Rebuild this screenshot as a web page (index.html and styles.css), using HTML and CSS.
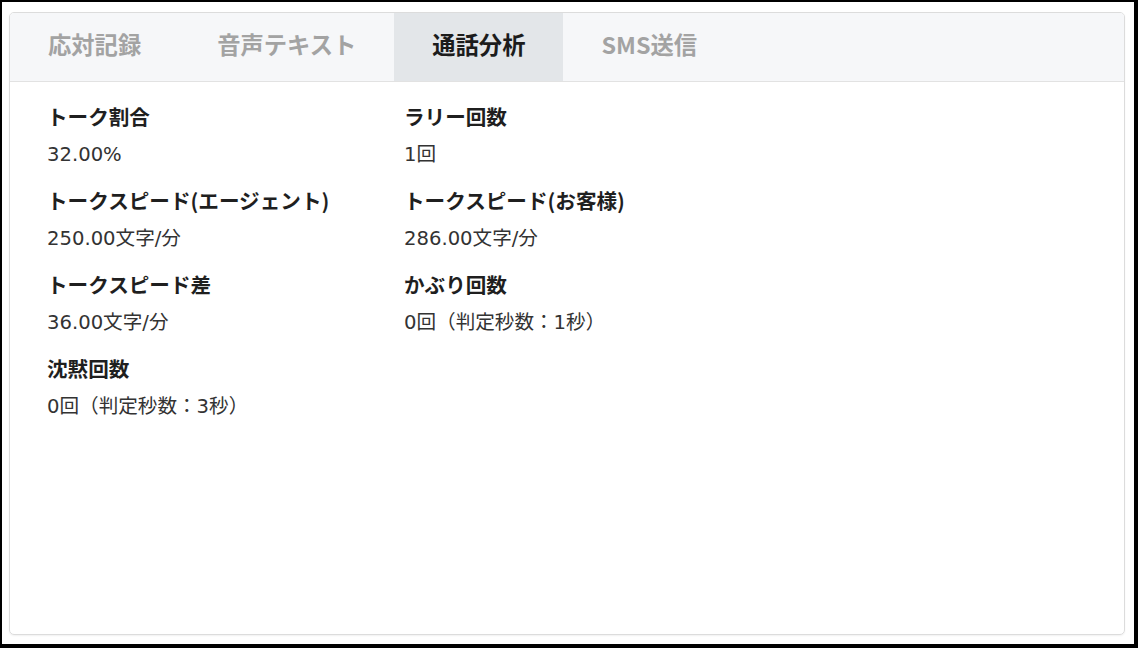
FILE: index.html
```html
<!DOCTYPE html>
<html lang="ja">
<head>
<meta charset="utf-8">
<title>通話分析</title>
<link rel="stylesheet" href="styles.css">
</head>
<body>
<div class="frame">
  <div class="card">
    <div class="tabs">
      <div class="tab">応対記録</div>
      <div class="tab">音声テキスト</div>
      <div class="tab active">通話分析</div>
      <div class="tab">SMS送信</div>
    </div>
    <div class="content">
      <div class="item">
        <div class="label">トーク割合</div>
        <div class="value">32.00%</div>
      </div>
      <div class="item">
        <div class="label">ラリー回数</div>
        <div class="value">1回</div>
      </div>
      <div class="item">
        <div class="label">トークスピード(エージェント)</div>
        <div class="value">250.00文字/分</div>
      </div>
      <div class="item">
        <div class="label">トークスピード(お客様)</div>
        <div class="value">286.00文字/分</div>
      </div>
      <div class="item">
        <div class="label">トークスピード差</div>
        <div class="value">36.00文字/分</div>
      </div>
      <div class="item">
        <div class="label">かぶり回数</div>
        <div class="value">0回（判定秒数：1秒）</div>
      </div>
      <div class="item">
        <div class="label">沈黙回数</div>
        <div class="value">0回（判定秒数：3秒）</div>
      </div>
    </div>
  </div>
</div>
</body>
</html>
```
FILE: styles.css
```css
* { box-sizing: border-box; }
html, body {
  margin: 0;
  padding: 0;
  background: #ffffff;
}
.frame {
  width: 1138px;
  height: 648px;
  border-style: solid;
  border-color: #000000;
  border-width: 2px 4px 4px 2px;
  background: #ffffff;
  padding: 10px 9px 9px 7px;
  display: flex;
}
.card {
  flex: 1;
  border: 1px solid #dcdcdc;
  border-radius: 5px;
  box-shadow: 0 1px 2px rgba(0, 0, 0, 0.06);
  overflow: hidden;
  display: flex;
  flex-direction: column;
  font-family: "Noto Sans CJK JP", "Noto Sans", sans-serif;
}
.tabs {
  display: flex;
  height: 69px;
  background: #f6f7f9;
  border-bottom: 1px solid #e2e2e2;
}
.tab {
  padding: 0 38px 5px 38px;
  line-height: 63px;
  font-size: 23.3px;
  font-weight: 700;
  color: #a3a3a3;
  white-space: nowrap;
}
.tab.active {
  background: #e3e6e9;
  color: #1c1c1c;
}
.content {
  display: grid;
  grid-template-columns: 357px 357px;
  row-gap: 17px;
  padding: 20px 37px 0 37px;
  align-content: start;
}
.item {
  display: flex;
  flex-direction: column;
  gap: 11px;
}
.label {
  font-size: 20.6px;
  line-height: 28px;
  font-weight: 700;
  color: #1f1f1f;
  white-space: nowrap;
}
.value {
  font-family: "DejaVu Sans", "Noto Sans CJK JP", sans-serif;
  font-size: 19.6px;
  line-height: 28px;
  color: #333333;
  white-space: nowrap;
}
```
